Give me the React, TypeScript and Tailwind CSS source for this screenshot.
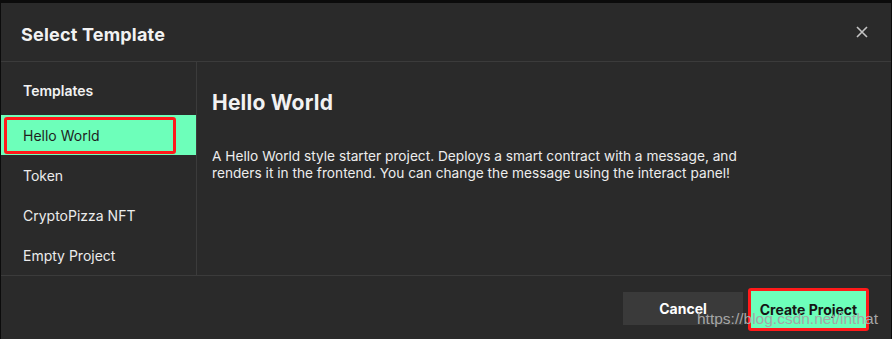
import React, { useState } from 'react';

const templates = ['Hello World', 'Token', 'CryptoPizza NFT', 'Empty Project'];

const App: React.FC = () => {
  const [selected, setSelected] = useState('Hello World');

  return (
    <div
      className="relative w-[892px] h-[339px] bg-[#0b0b0b] pt-[3px] px-px overflow-hidden"
      style={{ fontFamily: 'Inter, "Noto Sans", sans-serif' }}
    >
      <div className="flex flex-col h-[336px] bg-[#2a2a2a] text-[#f2f2f2]">
        {/* Header */}
        <div className="flex items-center justify-between h-[59px] shrink-0 border-b border-[#3b3b3b] pl-5 pr-[22px]">
          <h2 className="pt-[5px] text-[18px] font-bold tracking-[0.2px]">Select Template</h2>
          <button className="text-[#c4c4c4]">
            <svg width="14" height="14" viewBox="0 0 14 14" fill="none" stroke="currentColor" strokeWidth="1.6">
              <path d="M2 2l10 10M12 2L2 12" />
            </svg>
          </button>
        </div>

        {/* Body */}
        <div className="flex h-[214px] shrink-0 border-b border-[#3b3b3b]">
          <div className="w-[196px] shrink-0 border-r border-[#3b3b3b]">
            <div className="h-[53px] flex items-end pb-[14px] pl-[22px] text-[14px] font-semibold">
              Templates
            </div>
            {templates.map((t) => (
              <div
                key={t}
                onClick={() => setSelected(t)}
                className={`relative h-10 flex items-center pl-[22px] text-[14px] cursor-pointer ${
                  selected === t ? 'bg-[#6dffba] text-[#1e1e1e]' : 'text-[#ececec]'
                }`}
              >
                {t}
                {t === 'Hello World' && (
                  <div className="absolute left-[3px] top-[2px] w-[172px] h-[37px] border-[3px] border-[#ff1a1a] rounded-[3px]" />
                )}
              </div>
            ))}
          </div>
          <div className="flex-1 pl-[15px] pt-[29px]">
            <h3 className="text-[21px] font-bold leading-[24px] tracking-[0.2px]">Hello World</h3>
            <p className="mt-[33px] text-[13.7px] leading-[17px] text-[#ededed] max-w-[545px]">
              A Hello World style starter project. Deploys a smart contract with a message, and renders it in the
              frontend. You can change the message using the interact panel!
            </p>
          </div>
        </div>

        {/* Footer */}
        <div className="flex-1 flex items-start justify-end gap-[5px] pt-[12px] pr-[22px]">
          <button className="mt-[4px] w-[120px] h-[33px] bg-[#3a3a3a] text-[14px] font-bold text-white">
            Cancel
          </button>
          <button className="w-[121px] h-[43px] bg-[#6dffba] border-[3px] border-[#ff1a1a] rounded-[3px] text-[14px] font-bold text-[#151515]">
            Create Project
          </button>
        </div>
      </div>

      {/* watermark */}
      <div
        className="absolute z-10 left-[697px] top-[307px] text-[15.5px] text-[#a6a6a6] pointer-events-none whitespace-nowrap"
        style={{ fontFamily: '"Liberation Sans", Arial, sans-serif' }}
      >
        https://blog.csdn.net/inthat
      </div>
    </div>
  );
};

export default App;
